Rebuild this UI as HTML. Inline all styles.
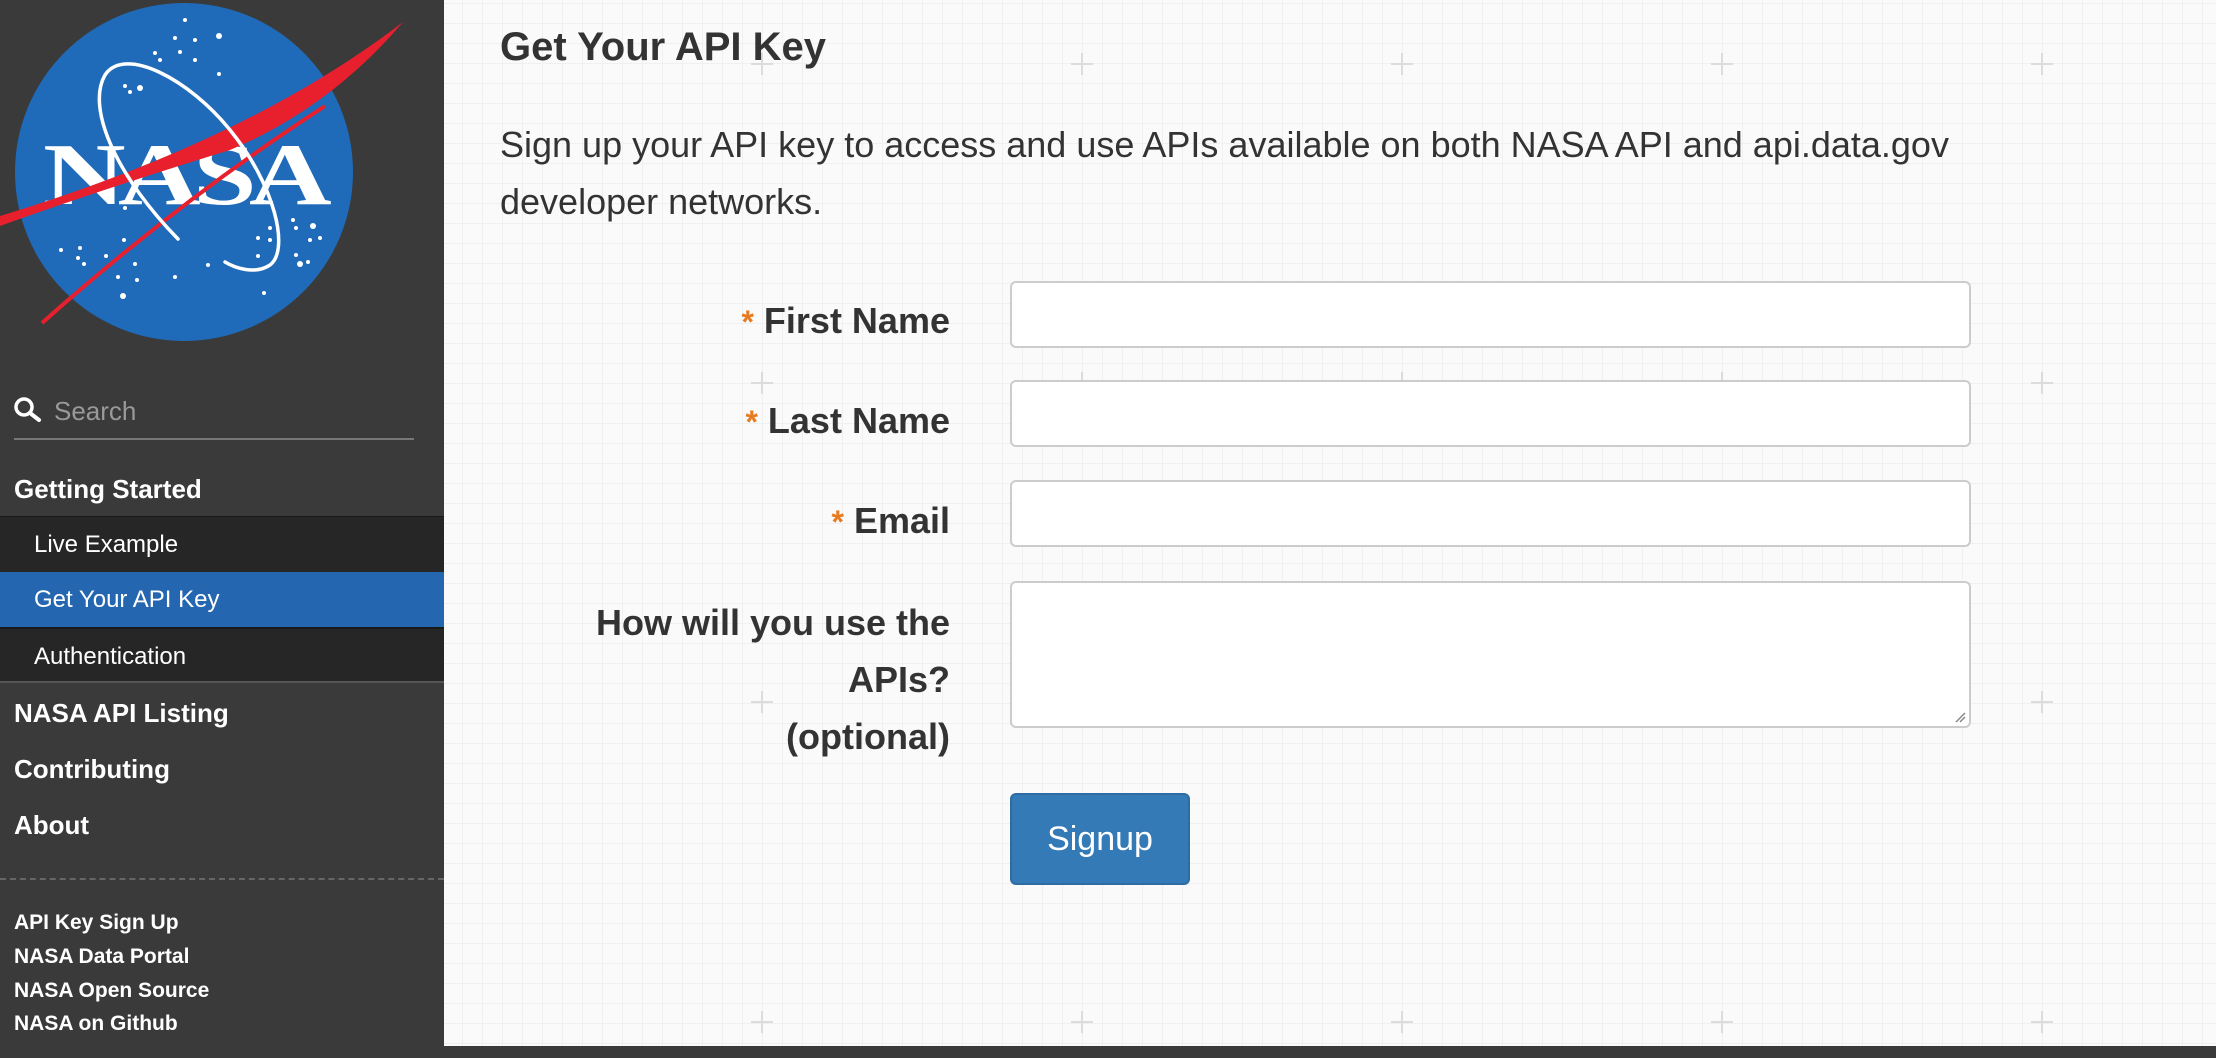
<!DOCTYPE html>
<html><head><meta charset="utf-8"><style>
*{box-sizing:border-box;margin:0;padding:0}
body{width:2216px;height:1058px;overflow:hidden;font-family:"Liberation Sans",Helvetica,Arial,sans-serif;background:#3a3a3a;position:relative}
#side{position:absolute;left:0;top:0;width:444px;height:1058px;background:#3a3a3a;color:#fff}
#main{position:absolute;left:444px;top:0;width:1772px;height:1046px;background-color:#fafafa;
background-image:linear-gradient(#f0f0f0 1px,transparent 1px),linear-gradient(90deg,#f0f0f0 1px,transparent 1px);
background-size:20px 20px;background-position:-2px 3px;overflow:hidden}
.cross{position:absolute;width:22px;height:22px}
.cross:before,.cross:after{content:"";position:absolute;background:#dcdcdc}
.cross:before{left:10px;top:0;width:2px;height:22px}
.cross:after{top:10px;left:0;height:2px;width:22px}
.s{position:absolute;left:0;width:444px;font-weight:bold}
h1{position:absolute;left:56px;top:25px;font-size:40px;color:#333;font-weight:bold}
p.d{position:absolute;left:56px;top:116px;font-size:36px;line-height:57px;color:#333;width:1480px}
.lab{position:absolute;right:calc(1772px - 506px);font-size:36px;font-weight:bold;color:#333;text-align:right;white-space:nowrap}
.lab b{color:#e87a20;font-size:32px;margin-right:10px}
.in{position:absolute;left:566px;width:961px;background:#fff;border:2px solid #ccc;border-radius:6px}
</style></head><body>
<div id="side">
<svg width="444" height="360" style="position:absolute;left:0;top:0">
<circle cx="184" cy="172" r="169" fill="#1f6bb9"/>
<g fill="#fff">
<circle cx="185" cy="20" r="2"/><circle cx="175" cy="38" r="2"/><circle cx="195" cy="40" r="2"/><circle cx="219" cy="36" r="3"/><circle cx="180" cy="52" r="2"/><circle cx="195" cy="60" r="2"/><circle cx="155" cy="53" r="2"/><circle cx="160" cy="60" r="2"/><circle cx="219" cy="74" r="2"/><circle cx="125" cy="86" r="2"/><circle cx="140" cy="88" r="3"/><circle cx="130" cy="92" r="2"/>
<circle cx="61" cy="250" r="2"/><circle cx="80" cy="248" r="2"/><circle cx="78" cy="258" r="2"/><circle cx="84" cy="264" r="2"/><circle cx="106" cy="256" r="2"/><circle cx="135" cy="264" r="2"/><circle cx="124" cy="240" r="2"/><circle cx="118" cy="277" r="2"/><circle cx="137" cy="280" r="2"/><circle cx="123" cy="296" r="3"/><circle cx="175" cy="277" r="2"/><circle cx="208" cy="265" r="2"/><circle cx="125" cy="208" r="2"/>
<circle cx="258" cy="238" r="2"/><circle cx="270" cy="228" r="2"/><circle cx="270" cy="240" r="2"/><circle cx="293" cy="220" r="2"/><circle cx="296" cy="228" r="2"/><circle cx="313" cy="226" r="3"/><circle cx="310" cy="240" r="2"/><circle cx="320" cy="238" r="2"/><circle cx="296" cy="255" r="2"/><circle cx="300" cy="264" r="3"/><circle cx="308" cy="262" r="2"/><circle cx="258" cy="256" r="2"/><circle cx="264" cy="293" r="2"/>
</g>
<text x="0" y="0" font-family="Liberation Serif,serif" font-weight="bold" font-size="88" fill="#fff" transform="translate(43 204) scale(1.3 1)" textLength="222" lengthAdjust="spacing">NASA</text>
<path d="M0 216 Q250 140 403 22 Q330 108 230 150 Q100 190 0 226Z" fill="#e8202e"/>
<path d="M325 106 Q180 200 42 323" fill="none" stroke="#e8202e" stroke-width="4"/>
<path d="M178 239 C120 180 85 110 105 75 C125 45 190 80 230 130 C275 185 290 250 270 265 C255 275 235 268 225 262" fill="none" stroke="#fff" stroke-width="3.5" stroke-linecap="round"/>
</svg>
<svg width="30" height="30" style="position:absolute;left:13px;top:396px"><circle cx="11" cy="11" r="8" fill="none" stroke="#fff" stroke-width="3.5"/><path d="M17 17 L26 24" stroke="#fff" stroke-width="4" stroke-linecap="round"/></svg>
<div style="position:absolute;left:54px;top:396px;font-size:26px;color:#999">Search</div>
<div style="position:absolute;left:14px;top:438px;width:400px;height:2px;background:#777"></div>
<div class="s" style="top:474px;left:14px;font-size:26px">Getting Started</div>
<div class="s" style="top:516px;height:56px;background:#262626;border-top:1px solid #1a1a1a;font-weight:normal;font-size:24px;padding:14px 0 0 34px">Live Example</div>
<div class="s" style="top:572px;height:55px;background:#2566b0;font-weight:normal;font-size:24px;padding:14px 0 0 34px">Get Your API Key</div>
<div class="s" style="top:627px;height:56px;background:#262626;border-top:2px solid #1a1a1a;border-bottom:2px solid #555;font-weight:normal;font-size:24px;padding:14px 0 0 34px">Authentication</div>
<div class="s" style="top:698px;left:14px;font-size:26px">NASA API Listing</div>
<div class="s" style="top:754px;left:14px;font-size:26px">Contributing</div>
<div class="s" style="top:810px;left:14px;font-size:26px">About</div>
<div style="position:absolute;left:0;top:878px;width:444px;border-top:2px dashed #666"></div>
<div class="s" style="top:911px;left:14px;font-size:21px">API Key Sign Up</div>
<div class="s" style="top:945px;left:14px;font-size:21px">NASA Data Portal</div>
<div class="s" style="top:979px;left:14px;font-size:21px">NASA Open Source</div>
<div class="s" style="top:1012px;left:14px;font-size:21px">NASA on Github</div>
</div>
<div id="main">
<div class="cross" style="left:307px;top:53px"></div><div class="cross" style="left:627px;top:53px"></div><div class="cross" style="left:947px;top:53px"></div><div class="cross" style="left:1267px;top:53px"></div><div class="cross" style="left:1587px;top:53px"></div>
<div class="cross" style="left:307px;top:372px"></div><div class="cross" style="left:627px;top:372px"></div><div class="cross" style="left:947px;top:372px"></div><div class="cross" style="left:1267px;top:372px"></div><div class="cross" style="left:1587px;top:372px"></div>
<div class="cross" style="left:307px;top:691px"></div><div class="cross" style="left:627px;top:691px"></div><div class="cross" style="left:947px;top:691px"></div><div class="cross" style="left:1267px;top:691px"></div><div class="cross" style="left:1587px;top:691px"></div>
<div class="cross" style="left:307px;top:1011px"></div><div class="cross" style="left:627px;top:1011px"></div><div class="cross" style="left:947px;top:1011px"></div><div class="cross" style="left:1267px;top:1011px"></div><div class="cross" style="left:1587px;top:1011px"></div>
<h1>Get Your API Key</h1>
<p class="d">Sign up your API key to access and use APIs available on both NASA API and api.data.gov developer networks.</p>
<div class="lab" style="top:300px"><b>*</b>First Name</div>
<div class="lab" style="top:400px"><b>*</b>Last Name</div>
<div class="lab" style="top:500px"><b>*</b>Email</div>
<div class="lab" style="top:594px;line-height:57px">How will you use the<br>APIs?<br>(optional)</div>
<div class="in" style="top:281px;height:67px"></div>
<div class="in" style="top:380px;height:67px"></div>
<div class="in" style="top:480px;height:67px"></div>
<div class="in" style="top:581px;height:147px"><svg width="12" height="12" style="position:absolute;right:3px;bottom:3px"><path d="M2 11 L11 2 M6 11 L11 6" stroke="#888" stroke-width="1.5"/></svg></div>
<div style="position:absolute;left:566px;top:793px;width:180px;height:92px;background:#337ab7;border:2px solid #2e6da4;border-radius:6px;color:#fff;font-size:34px;text-align:center;line-height:88px">Signup</div>
</div>
<div style="position:absolute;left:444px;top:1046px;width:1772px;height:12px;background:#3a3a3a"></div>
</body></html>
